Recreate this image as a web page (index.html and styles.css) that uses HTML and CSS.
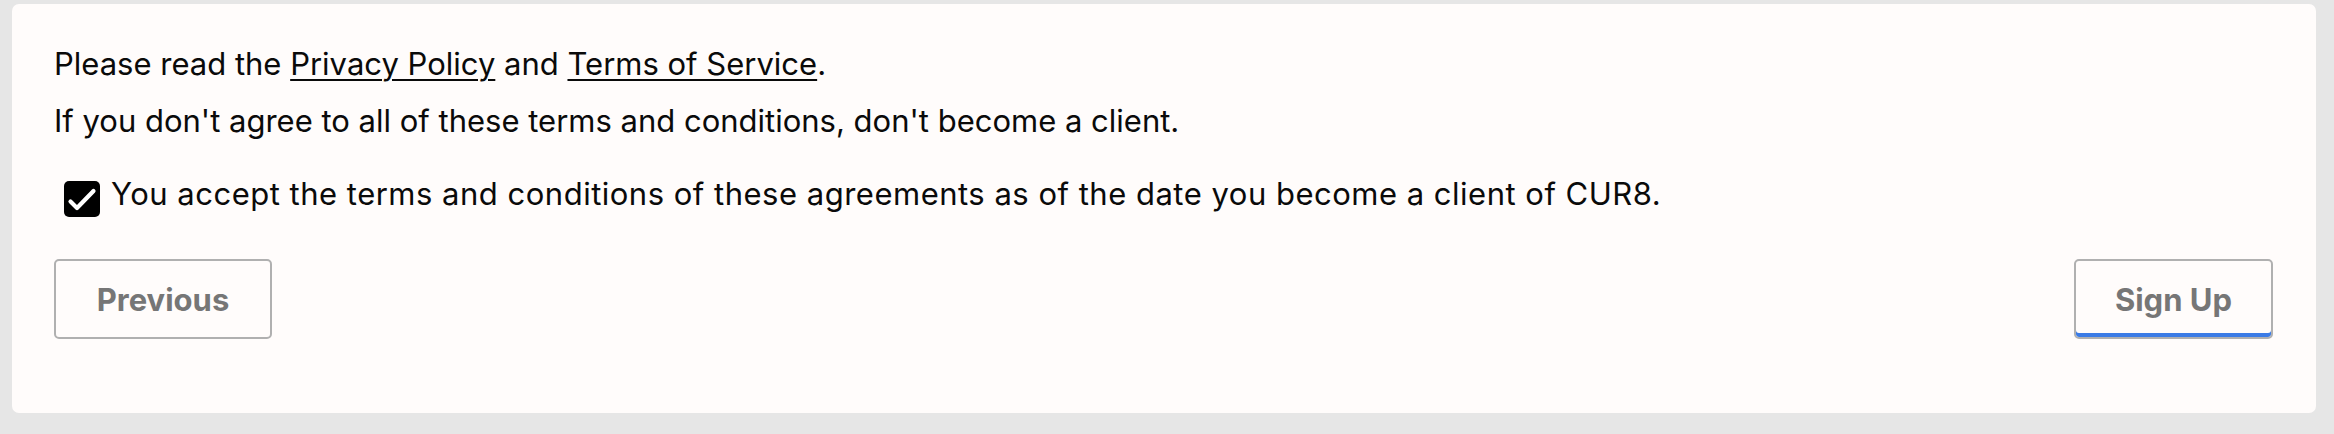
FILE: index.html
```html
<!DOCTYPE html>
<html lang="en">
<head>
<meta charset="utf-8">
<title>Terms</title>
<link rel="stylesheet" href="styles.css">
</head>
<body>
<div class="page">
  <section class="card">
    <p class="line">Please read the <a href="#" class="link">Privacy Policy</a> and <a href="#" class="link">Terms of Service</a>.</p>
    <p class="line">If you don't agree to all of these terms and conditions, don't become a client.</p>
    <label class="accept">
      <span class="checkbox">
        <svg viewBox="0 0 36 36" width="36" height="36" aria-hidden="true">
          <path d="M6.5 20.5 L13 27 L29.5 10" fill="none" stroke="#fff" stroke-width="4.2" stroke-linecap="round" stroke-linejoin="round"/>
        </svg>
      </span>
      <span class="accept-text">You accept the terms and conditions of these agreements as of the date you become a client of CUR8.</span>
    </label>
    <div class="actions">
      <button class="btn btn-prev" type="button">Previous</button>
      <button class="btn btn-signup" type="button">Sign Up</button>
    </div>
  </section>
</div>
</body>
</html>
```
FILE: styles.css
```css
html, body {
  margin: 0;
  padding: 0;
  background: #e6e6e6;
}
body {
  font-family: "Inter", "Noto Sans", sans-serif;
  color: #0a0a0a;
}
.page {
  padding: 4px 18px 20px 12px;
}
.card {
  background: #fffcfb;
  border-radius: 7px;
  padding: 31px 43px 74px 42px;
}
.line {
  margin: 0;
  font-size: 31px;
  line-height: 57px;
}
.link {
  color: #0a0a0a;
  text-decoration: underline;
  text-decoration-thickness: 2px;
  text-underline-offset: 4px;
}
.accept {
  display: flex;
  align-items: flex-start;
  gap: 11px;
  margin-top: 25px;
  padding-left: 10px;
}
.checkbox {
  flex: none;
  width: 36px;
  height: 36px;
  margin-top: 7px;
  background: #000;
  border-radius: 5px;
  display: flex;
}
.accept-text {
  font-size: 31px;
  line-height: 40px;
  letter-spacing: 0.5px;
}
.actions {
  display: flex;
  justify-content: space-between;
  margin-top: 42px;
}
.btn {
  font-family: "Inter", "Noto Sans", sans-serif;
  font-weight: 700;
  font-size: 31px;
  color: #767676;
  background: transparent;
  border: 2px solid #b0b0b0;
  border-radius: 5px;
  height: 80px;
  padding: 0;
}
.btn-prev {
  width: 218px;
}
.btn-signup {
  width: 199px;
  box-shadow: inset 0 -4px 0 #3b7be6;
}
```
